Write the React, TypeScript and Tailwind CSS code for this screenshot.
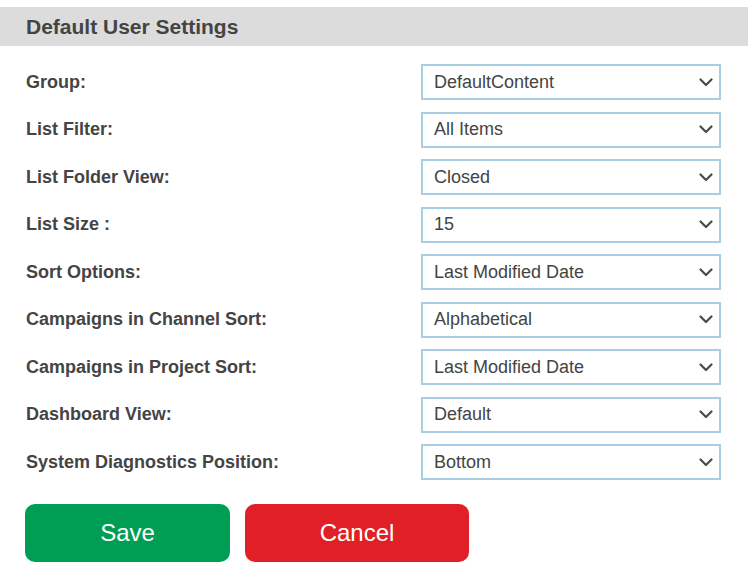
const rows: { label: string; value: string }[] = [
  { label: "Group:", value: "DefaultContent" },
  { label: "List Filter:", value: "All Items" },
  { label: "List Folder View:", value: "Closed" },
  { label: "List Size :", value: "15" },
  { label: "Sort Options:", value: "Last Modified Date" },
  { label: "Campaigns in Channel Sort:", value: "Alphabetical" },
  { label: "Campaigns in Project Sort:", value: "Last Modified Date" },
  { label: "Dashboard View:", value: "Default" },
  { label: "System Diagnostics Position:", value: "Bottom" },
];

const Chevron = () => (
  <svg width="14" height="9" viewBox="0 0 14 9" fill="none">
    <path d="M1.5 1.5L7 7L12.5 1.5" stroke="#4a4a4a" strokeWidth="2.2" strokeLinecap="round" strokeLinejoin="round" />
  </svg>
);

const App = () => {
  return (
    <div className="w-[748px] h-[574px] bg-white pt-[7px] font-['Liberation_Sans',Arial,sans-serif] text-[#444444]">
      <div className="h-[39px] bg-[#dcdcdc] pl-[26px] flex items-center">
        <h2 className="text-[21px] font-bold leading-none">Default User Settings</h2>
      </div>

      <div className="flex flex-col gap-[11.5px] pt-[18px] pl-[26px] pr-[27px]">
        {rows.map((r) => (
          <div key={r.label} className="flex items-center justify-between h-[36px]">
            <span className="text-[18px] font-bold">{r.label}</span>
            <div className="w-[300px] h-[36px] border-2 border-[#a9cde3] flex items-center justify-between pl-[11px] pr-[6px]">
              <span className="text-[18px] text-[#444444]">{r.value}</span>
              <Chevron />
            </div>
          </div>
        ))}
      </div>

      <div className="flex gap-[15px] pl-[25px] pt-[24px]">
        <button className="w-[205px] h-[58px] rounded-[10px] bg-[#009e55] text-white text-[24px]">Save</button>
        <button className="w-[224px] h-[58px] rounded-[10px] bg-[#e01f26] text-white text-[24px]">Cancel</button>
      </div>
    </div>
  );
};

export default App;
